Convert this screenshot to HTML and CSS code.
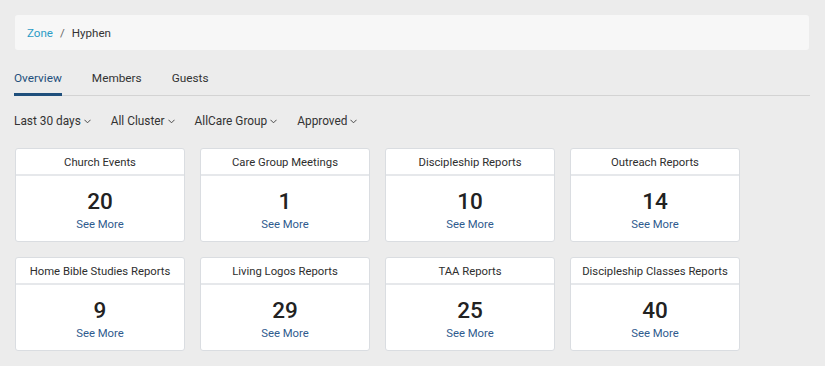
FILE: index.html
```html
<!DOCTYPE html>
<html lang="en">
<head>
  <meta charset="UTF-8" />
  <title>Hyphen - Overview</title>
  <link rel="stylesheet" href="styles.css">
</head>
<body>

  <div class="breadcrumb">
    <a href="#" class="crumb-link">Zone</a>
    <span class="crumb-sep">/</span>
    <span class="crumb-current">Hyphen</span>
  </div>

  <ul class="tabs">
    <li class="tab active">Overview</li>
    <li class="tab">Members</li>
    <li class="tab">Guests</li>
  </ul>

  <div class="filters">
    <span class="filter">Last 30 days<svg class="chev" viewBox="0 0 8 5"><path d="M0.5 0.5 L4 4 L7.5 0.5"/></svg></span>
    <span class="filter">All Cluster<svg class="chev" viewBox="0 0 8 5"><path d="M0.5 0.5 L4 4 L7.5 0.5"/></svg></span>
    <span class="filter">AllCare Group<svg class="chev" viewBox="0 0 8 5"><path d="M0.5 0.5 L4 4 L7.5 0.5"/></svg></span>
    <span class="filter">Approved<svg class="chev" viewBox="0 0 8 5"><path d="M0.5 0.5 L4 4 L7.5 0.5"/></svg></span>
  </div>

  <div class="cards">
    <div class="card">
      <div class="card-head">Church Events</div>
      <div class="card-body"><div class="count">20</div><a href="#" class="more">See More</a></div>
    </div>
    <div class="card">
      <div class="card-head">Care Group Meetings</div>
      <div class="card-body"><div class="count">1</div><a href="#" class="more">See More</a></div>
    </div>
    <div class="card">
      <div class="card-head">Discipleship Reports</div>
      <div class="card-body"><div class="count">10</div><a href="#" class="more">See More</a></div>
    </div>
    <div class="card">
      <div class="card-head">Outreach Reports</div>
      <div class="card-body"><div class="count">14</div><a href="#" class="more">See More</a></div>
    </div>
    <div class="card">
      <div class="card-head">Home Bible Studies Reports</div>
      <div class="card-body"><div class="count">9</div><a href="#" class="more">See More</a></div>
    </div>
    <div class="card">
      <div class="card-head">Living Logos Reports</div>
      <div class="card-body"><div class="count">29</div><a href="#" class="more">See More</a></div>
    </div>
    <div class="card">
      <div class="card-head">TAA Reports</div>
      <div class="card-body"><div class="count">25</div><a href="#" class="more">See More</a></div>
    </div>
    <div class="card">
      <div class="card-head">Discipleship Classes Reports</div>
      <div class="card-body"><div class="count">40</div><a href="#" class="more">See More</a></div>
    </div>
  </div>

</body>
</html>
```

FILE: styles.css
```css
body {
  margin: 0;
  padding: 15px 15px 0 14px;
  background: #ececec;
  font-family: Roboto, "Liberation Sans", Arial, sans-serif;
  font-size: 12px;
  color: #333;
}
a {
  text-decoration: none;
}

.breadcrumb {
  width: 770px;
  height: 35px;
  margin-left: 1px;
  padding: 0 12px;
  display: flex;
  align-items: center;
  gap: 7px;
  font-size: 11.6px;
  background: #f7f7f7;
  border-radius: 3px;
}
.crumb-link    { color: #2a9bc6; }
.crumb-sep     { color: #666; }
.crumb-current { color: #333; }

.tabs {
  list-style: none;
  width: 796px;
  margin: 14px 0 0;
  padding: 0;
  display: flex;
  gap: 30px;
  border-bottom: 1px solid #d3d3d3;
}
.tab {
  padding: 6px 0 7px;
  line-height: 16px;
  font-size: 11.8px;
  color: #333;
  border-bottom: 3px solid transparent;
  margin-bottom: -1px;
}
.tab.active {
  color: #1f4f7c;
  border-bottom-color: #1f4f7c;
}

.filters {
  margin-top: 16px;
  display: flex;
  gap: 20px;
  line-height: 18px;
  font-size: 11.85px;
}
.filter {
  display: flex;
  align-items: center;
  gap: 3px;
  color: #333;
}
.chev {
  width: 7px;
  height: 5px;
  margin-top: 1px;
  fill: none;
  stroke: #444;
  stroke-width: 1.1;
}

.cards {
  margin: 18px 0 0 1px;
  display: grid;
  grid-template-columns: repeat(4, 170px);
  gap: 15px;
}
.card {
  background: #fff;
  border: 1px solid #dadde1;
  border-radius: 3px;
}
.card-head {
  height: 23px;
  padding-top: 2px;
  line-height: 23px;
  text-align: center;
  font-size: 11.3px;
  border-bottom: 2px solid #e6e8eb;
  color: #2e2e2e;
}
.card-body {
  padding: 12px 0 8px;
  text-align: center;
}
.count {
  font-size: 22.5px;
  font-weight: 500;
  line-height: 26px;
  color: #222;
}
.more {
  display: block;
  margin-top: 3px;
  line-height: 16px;
  font-size: 11.3px;
  color: #2f5b8e;
}
```
